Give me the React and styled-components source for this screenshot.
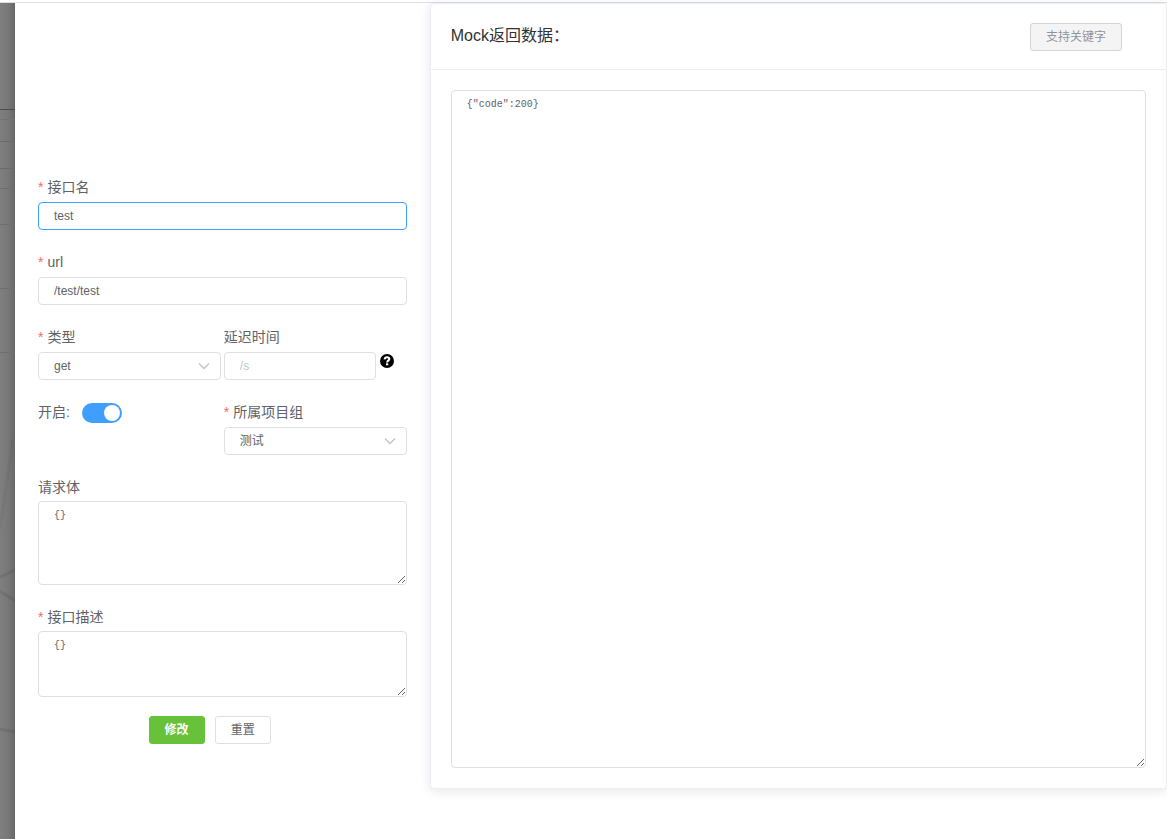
import React, { useState } from 'react';
import styled, { createGlobalStyle } from 'styled-components';

const GlobalStyle = createGlobalStyle`
  * {
    box-sizing: border-box;
  }

  body {
    margin: 0;
    background: #fff;
    color: #606266;
    font-family: 'Liberation Sans', 'Noto Sans CJK SC', sans-serif;
    font-size: 14px;
  }

  input, select, textarea, button {
    font-family: inherit;
    outline: none;
  }
`;

const Page = styled.div`
  display: flex;
  flex-direction: column;
  min-height: 100vh;
`;

const TopBar = styled.div`
  height: 3px;
  border-bottom: 1px solid #dcdfe6;
`;

const Body = styled.div`
  flex: 1;
  display: flex;
`;

const Backdrop = styled.div`
  position: relative;
  width: 15px;
  overflow: hidden;
  background: linear-gradient(to right, #7f7f7f, #787878 50%, #686868);
`;

const BackdropRow = styled.div`
  height: ${({ $height }) => $height}px;
  border-bottom: 1px solid ${({ $line }) => $line};
`;

const BackdropArt = styled.svg`
  position: absolute;
  left: 0;
  bottom: 0;
`;

const Drawer = styled.main`
  flex: 1;
  display: grid;
  grid-template-columns: 36fr 64fr;
  align-items: start;
  background: #fff;
`;

const Form = styled.form`
  padding: 174px 23px 0;
`;

const FormItem = styled.div`
  margin-bottom: 22px;
`;

const FormRow = styled.div`
  display: grid;
  grid-template-columns: 1fr 1fr;
  gap: 3px;
`;

const Label = styled.label`
  display: block;
  line-height: 20px;
  padding-bottom: ${({ $area }) => ($area ? 4 : 5)}px;

  ${({ $required }) => $required && `
    &::before {
      content: '*';
      color: #f56c6c;
      margin-right: 4px;
    }
  `}
`;

const Input = styled.input`
  display: block;
  width: 100%;
  min-width: 0;
  height: 28px;
  padding: 0 15px;
  border: 1px solid ${({ $active }) => ($active ? '#409eff' : '#dcdfe6')};
  border-radius: 4px;
  background: #fff;
  color: #606266;
  font-size: 12px;

  &::placeholder {
    color: #c0c4cc;
  }

  &:focus {
    border-color: #409eff;
  }
`;

const SelectWrap = styled.div`
  position: relative;
`;

const Select = styled.select`
  display: block;
  width: 100%;
  height: 28px;
  padding: 0 30px 0 15px;
  border: 1px solid #dcdfe6;
  border-radius: 4px;
  background: #fff;
  color: #606266;
  font-size: 12px;
  appearance: none;
`;

const Arrow = styled.svg`
  position: absolute;
  top: 8px;
  right: 11px;
  pointer-events: none;
`;

const TextArea = styled.textarea`
  display: block;
  width: 100%;
  padding: 5px 15px;
  border: 1px solid #dcdfe6;
  border-radius: 4px;
  background: #fff;
  color: #606266;
  font-family: 'Liberation Mono', monospace;
  font-size: 10px;
  line-height: 18px;
  resize: vertical;
`;

const DelayField = styled.div`
  display: flex;
  gap: 4px;
  padding-right: 13px;
`;

const HelpIcon = styled.svg`
  flex-shrink: 0;
  margin-top: 2px;
`;

const SwitchRow = styled.div`
  display: flex;
  align-items: flex-start;
  gap: 12px;
`;

const Switch = styled.input`
  appearance: none;
  width: 40px;
  height: 20px;
  margin: 1px 0 0;
  border-radius: 10px;
  background: #dcdfe6;
  cursor: pointer;

  &::before {
    content: '';
    display: block;
    width: 16px;
    height: 16px;
    margin: 2px;
    border-radius: 50%;
    background: #fff;
  }

  &:checked {
    background: #409eff;
  }

  &:checked::before {
    margin-left: 22px;
  }
`;

const Actions = styled.div`
  display: flex;
  gap: 10px;
  margin-top: 19px;
  padding-left: 30%;
`;

const buttonColors = {
  default: { bg: '#fff', border: '#dcdfe6', text: '#606266' },
  success: { bg: '#67c23a', border: '#67c23a', text: '#fff' },
  info: { bg: '#f4f4f5', border: '#d3d4d6', text: '#909399' },
};

const Button = styled.button`
  height: 28px;
  padding: 0 15px;
  border: 1px solid ${({ $type }) => buttonColors[$type].border};
  border-radius: 3px;
  background: ${({ $type }) => buttonColors[$type].bg};
  color: ${({ $type }) => buttonColors[$type].text};
  font-size: 12px;
  font-weight: ${({ $type }) => ($type === 'success' ? 700 : 400)};
  line-height: 18px;
  white-space: nowrap;
  cursor: pointer;
`;

const Card = styled.section`
  border: 1px solid #ebeef5;
  border-radius: 4px;
  background: #fff;
  box-shadow: 0 2px 12px 0 rgba(0, 0, 0, 0.1);
`;

const CardHeader = styled.header`
  display: flex;
  align-items: flex-start;
  justify-content: space-between;
  padding: 19px 44px 18px 20px;
  border-bottom: 1px solid #ebeef5;
`;

const CardTitle = styled.label`
  color: #303133;
  font-size: 16px;
  line-height: 26px;
`;

const CardBody = styled.div`
  padding: 20px;
`;

const backdropRows = [
  { height: 107, line: '#4c4c4c' },
  { height: 10, line: '#737373' },
  { height: 22, line: '#696969' },
  { height: 27, line: '#696a6d' },
  { height: 20, line: '#6c6e74' },
  { height: 36, line: '#6e6f75' },
  { height: 64, line: '#6e6f75' },
  { height: 64, line: '#6e6f75' },
];

const SelectArrow = () => (
  <Arrow width="12" height="12" viewBox="0 0 12 12" fill="none" stroke="#c0c4cc" strokeWidth="1.3" aria-hidden="true">
    <path d="M1 3.5L6 8.5L11 3.5" />
  </Arrow>
);

const App = () => {
  const [form, setForm] = useState({
    name: 'test',
    url: '/test/test',
    method: 'get',
    delay: '',
    enabled: true,
    group: '测试',
    body: '{}',
    description: '{}',
    response: '{"code":200}',
  });

  const handleChange = (e) => {
    const { name, type, checked, value } = e.target;
    setForm((prev) => ({ ...prev, [name]: type === 'checkbox' ? checked : value }));
  };

  return (
    <Page>
      <GlobalStyle />
      <TopBar />
      <Body>
        <Backdrop>
          {backdropRows.map((row, i) => (
            <BackdropRow key={i} $height={row.height} $line={row.line} />
          ))}
          <BackdropArt width="15" height="400" viewBox="0 0 15 400" fill="none" stroke="#000" strokeOpacity="0.08" strokeWidth="3" aria-hidden="true">
            <path d="M13 0L0 90" strokeOpacity="0.04" />
            <path d="M-2 139L17 130" />
            <path d="M-2 151L17 163" />
            <path d="M-2 290L17 293" />
          </BackdropArt>
        </Backdrop>

        <Drawer>
          <Form onSubmit={(e) => e.preventDefault()}>
            <FormItem>
              <Label htmlFor="name" $required>接口名</Label>
              <Input id="name" name="name" value={form.name} onChange={handleChange} $active />
            </FormItem>

            <FormItem>
              <Label htmlFor="url" $required>url</Label>
              <Input id="url" name="url" value={form.url} onChange={handleChange} />
            </FormItem>

            <FormRow>
              <FormItem>
                <Label htmlFor="method" $required>类型</Label>
                <SelectWrap>
                  <Select id="method" name="method" value={form.method} onChange={handleChange}>
                    <option value="get">get</option>
                    <option value="post">post</option>
                  </Select>
                  <SelectArrow />
                </SelectWrap>
              </FormItem>
              <FormItem>
                <Label htmlFor="delay">延迟时间</Label>
                <DelayField>
                  <Input id="delay" name="delay" placeholder="/s" value={form.delay} onChange={handleChange} />
                  <HelpIcon width="14" height="14" viewBox="0 0 14 14" aria-hidden="true">
                    <circle cx="7" cy="7" r="7" fill="#000" />
                    <path d="M4.6 5.3C4.8 3.9 5.7 3.3 7 3.3C8.3 3.3 9.3 4 9.3 5.1C9.3 6.6 7.1 6.6 7.1 8.4" fill="none" stroke="#fff" strokeWidth="2" />
                    <rect x="6" y="9.3" width="2.2" height="2" fill="#fff" />
                  </HelpIcon>
                </DelayField>
              </FormItem>
            </FormRow>

            <FormRow>
              <SwitchRow>
                <Label htmlFor="enabled">开启:</Label>
                <Switch id="enabled" name="enabled" type="checkbox" role="switch" checked={form.enabled} onChange={handleChange} />
              </SwitchRow>
              <FormItem>
                <Label htmlFor="group" $required>所属项目组</Label>
                <SelectWrap>
                  <Select id="group" name="group" value={form.group} onChange={handleChange}>
                    <option value="测试">测试</option>
                  </Select>
                  <SelectArrow />
                </SelectWrap>
              </FormItem>
            </FormRow>

            <FormItem>
              <Label htmlFor="body" $area>请求体</Label>
              <TextArea id="body" name="body" rows={4} value={form.body} onChange={handleChange} />
            </FormItem>

            <Label htmlFor="description" $required $area>接口描述</Label>
            <TextArea id="description" name="description" rows={3} value={form.description} onChange={handleChange} />

            <Actions>
              <Button type="submit" $type="success">修改</Button>
              <Button type="reset" $type="default">重置</Button>
            </Actions>
          </Form>

          <Card>
            <CardHeader>
              <CardTitle htmlFor="response">Mock返回数据：</CardTitle>
              <Button type="button" $type="info">支持关键字</Button>
            </CardHeader>
            <CardBody>
              <TextArea id="response" name="response" rows={37} value={form.response} onChange={handleChange} />
            </CardBody>
          </Card>
        </Drawer>
      </Body>
    </Page>
  );
};

export default App;
